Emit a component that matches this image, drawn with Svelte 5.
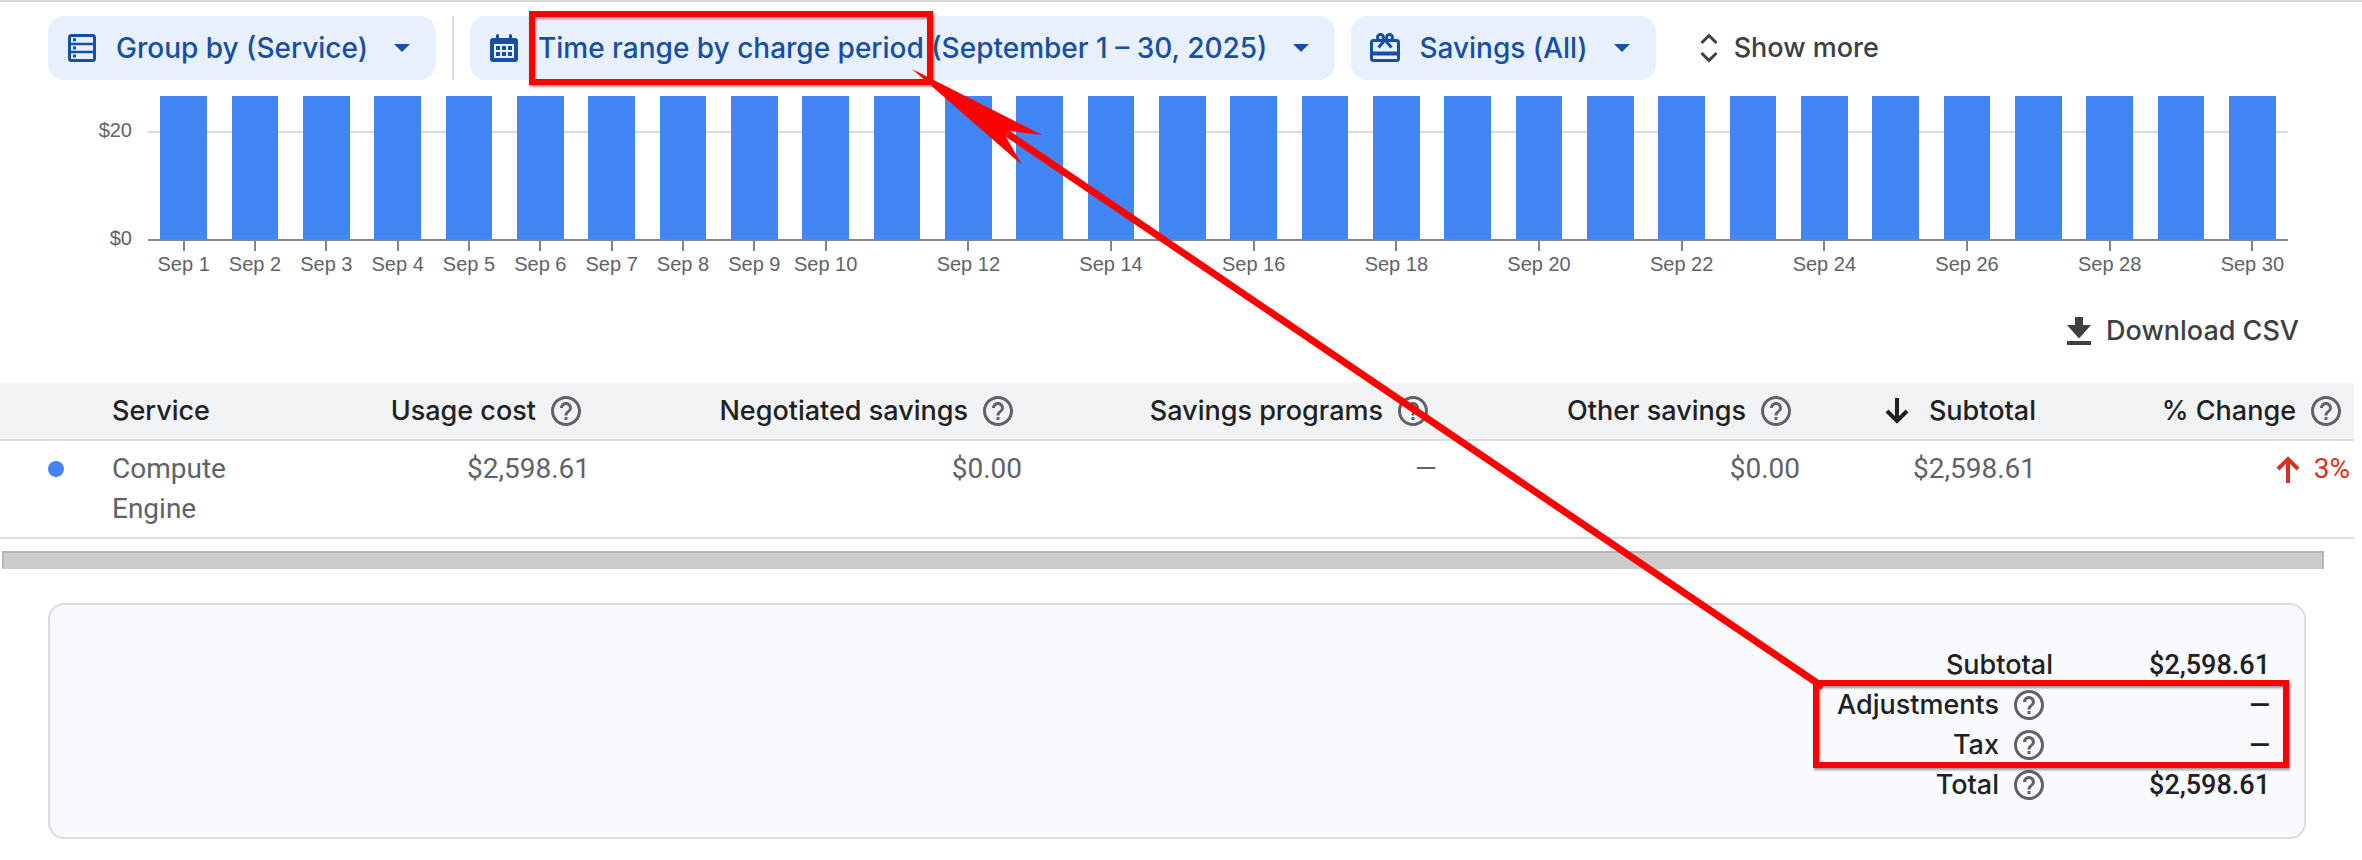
<script>
    const days = Array.from({ length: 30 }, (_, i) => i + 1);

    const columns = [
        { name: '', width: 112 },
        { name: 'Service', width: 168, align: 'left' },
        { name: 'Usage cost', width: 326, help: true },
        { name: 'Negotiated savings', width: 432, help: true },
        { name: 'Savings programs', width: 415, help: true },
        { name: 'Other savings', width: 363, help: true },
        { name: 'Subtotal', width: 236, sorted: true },
        { name: '% Change', width: 302, help: true },
    ];
    const totalWidth = columns.reduce((sum, c) => sum + c.width, 0);

    const services = [
        {
            name: 'Compute Engine',
            usage: '$2,598.61',
            negotiated: '$0.00',
            programs: '—',
            other: '$0.00',
            subtotal: '$2,598.61',
            change: '3%',
        },
    ];

    const totals = [
        { label: 'Subtotal', value: '$2,598.61' },
        { label: 'Adjustments', value: '—', help: true },
        { label: 'Tax', value: '—', help: true },
        { label: 'Total', value: '$2,598.61', help: true },
    ];

    // after the 10th only every other day is labelled
    function hasLabel(day) {
        return day <= 10 || day % 2 === 0;
    }
</script>

{#snippet helpButton(label)}
    <button class="help" aria-label="About {label}">
        <svg viewBox="0 0 24 24">
            <path
                d="M11 18h2v-2h-2v2zm1-16C6.48 2 2 6.48 2 12s4.48 10 10 10 10-4.48 10-10S17.52 2 12 2zm0 18c-4.41 0-8-3.59-8-8s3.59-8 8-8 8 3.59 8 8-3.59 8-8 8zm0-14c-2.21 0-4 1.79-4 4h2c0-1.1.9-2 2-2s2 .9 2 2c0 2-3 1.75-3 5h2c0-2.25 3-2.5 3-5 0-2.21-1.79-4-4-4z"
            />
        </svg>
    </button>
{/snippet}

{#snippet caret()}
    <svg class="icon" viewBox="0 0 36 36"><path d="M10 14h16l-8 8z" fill="currentColor" /></svg>
{/snippet}

<main class="report">
    <div class="toolbar">
        <button class="chip">
            <svg class="icon" viewBox="0 0 36 36" fill="none" stroke="currentColor">
                <rect x="5.5" y="5.5" width="25" height="25" rx="2" stroke-width="3" />
                <path d="M5 14h26M5 22h26" stroke-width="2.5" />
                <path d="M9 9.7h3M9 18h3M9 26h3" stroke-width="3" />
            </svg>
            <span>Group by (Service)</span>
            {@render caret()}
        </button>
        <div class="divider"></div>
        <button class="chip">
            <svg class="icon" viewBox="0 0 36 36" fill="currentColor">
                <path
                    fill-rule="evenodd"
                    d="M10 8V5.500a1.500 1.500 0 0 1 3 0V8h10V5.500a1.500 1.500 0 0 1 3 0V8h3a3 3 0 0 1 3 3v18a3 3 0 0 1-3 3H7a3 3 0 0 1-3-3V11a3 3 0 0 1 3-3zM8 14v14h20V14z"
                />
                <path d="M10 16h4v4h-4zM16 16h4v4h-4zM22 16h4v4h-4zM10 22h4v4h-4zM16 22h4v4h-4zM22 22h4v4h-4z" />
            </svg>
            <span>Time range by charge period (September 1 – 30, 2025)</span>
            {@render caret()}
        </button>
        <button class="chip">
            <svg class="icon" viewBox="0 0 36 36" fill="none" stroke="currentColor" stroke-width="3">
                <rect x="4.5" y="10.500" width="27" height="20" rx="2" />
                <path d="M4 23.500h28" stroke-width="4" />
                <circle cx="13.500" cy="7.500" r="3" />
                <circle cx="22.500" cy="7.500" r="3" />
                <path d="M18 10l-6.500 7.500M18 10l6.500 7.500" />
            </svg>
            <span>Savings (All)</span>
            {@render caret()}
        </button>
        <button class="show-more">
            <svg viewBox="0 0 18 30" fill="none" stroke="currentColor" stroke-width="3">
                <path d="M1.500 10L9 2.500l7.500 7.500M1.500 20L9 27.500l7.500-7.500" />
            </svg>
            <span>Show more</span>
        </button>
    </div>

    <section class="chart">
        <div class="y-axis">
            <span>$20</span>
            <span>$0</span>
        </div>
        <div class="plot">
            <div class="bars">
                {#each days as day}
                    <div class="bar"></div>
                {/each}
            </div>
            <div class="x-axis">
                {#each days as day}
                    <div class="tick" class:labelled={hasLabel(day)}>
                        {#if hasLabel(day)}Sep {day}{/if}
                    </div>
                {/each}
            </div>
        </div>
    </section>

    <div class="actions">
        <button class="download">
            <svg viewBox="0 0 24 28" fill="currentColor">
                <path d="M8 0h8v8h8L12 21.500 0 8h8zM0 24h24v4H0z" />
            </svg>
            <span>Download CSV</span>
        </button>
    </div>

    <table class="costs">
        <colgroup>
            {#each columns as column}
                <col style:width="{(column.width / totalWidth) * 100}%" />
            {/each}
        </colgroup>
        <thead>
            <tr>
                {#each columns as column}
                    <th class:left={column.align === 'left'}>
                        <div class="cell">
                            {#if column.sorted}
                                <svg class="sort" viewBox="0 0 24 26">
                                    <path d="M12 0v23M2 13l10 10 10-10" />
                                </svg>
                            {/if}
                            {column.name}
                            {#if column.help}
                                {@render helpButton(column.name)}
                            {/if}
                        </div>
                    </th>
                {/each}
            </tr>
        </thead>
        <tbody>
            {#each services as service}
                <tr>
                    <td><div class="dot"></div></td>
                    <td class="left">{service.name}</td>
                    <td>{service.usage}</td>
                    <td>{service.negotiated}</td>
                    <td>{service.programs}</td>
                    <td>{service.other}</td>
                    <td>{service.subtotal}</td>
                    <td>
                        <div class="cell change">
                            <svg viewBox="0 0 24 28"><path d="M12 28V4M2 14L12 4l10 10" /></svg>
                            {service.change}
                        </div>
                    </td>
                </tr>
            {/each}
        </tbody>
    </table>

    <div class="scrollbar"></div>

    <section class="summary">
        <table>
            <tbody>
                {#each totals as total}
                    <tr>
                        <th>
                            <div class="cell">
                                {total.label}
                                {#if total.help}
                                    {@render helpButton(total.label)}
                                {/if}
                            </div>
                        </th>
                        <td>{total.value}</td>
                    </tr>
                {/each}
            </tbody>
        </table>
    </section>

    <svg class="annotation" viewBox="0 0 2362 860" aria-hidden="true">
        <g class="boxes">
            <rect x="532" y="14" width="398" height="68" />
            <rect x="1816" y="683" width="470" height="82" />
        </g>
        <path class="shaft" d="M1008 134L1823 687" />
        <path class="head" d="M912 69L1042 135L1010 131L1006 137L1022 165z" />
    </svg>
</main>

<style>
    :global(body) {
        margin: 0;
        background: #fff;
    }

    .report {
        position: relative;
        border-top: 2px solid #dadce0;
        font-family: Inter, Roboto, sans-serif;
        font-size: 27px;
        font-weight: 500;
        line-height: 40px;
        color: #202124;
    }

    button {
        border: none;
        padding: 0;
        background: none;
        font: inherit;
        color: inherit;
        cursor: pointer;
    }

    svg {
        display: block;
        flex-shrink: 0;
    }

    .icon {
        width: 36px;
        height: 36px;
    }

    .toolbar {
        display: flex;
        gap: 16px;
        padding: 14px 48px 16px;
        font-size: 28px;
    }

    .chip {
        display: flex;
        align-items: center;
        gap: 16px;
        height: 64px;
        padding: 0 16px;
        border-radius: 16px;
        background: #e8f0fe;
        color: #174ea6;
        white-space: nowrap;
    }

    .divider {
        width: 2px;
        background: #dadce0;
    }

    .show-more {
        display: flex;
        align-items: center;
        gap: 16px;
        margin-left: 28px;
        font-size: 27px;
        color: #3c4043;
        white-space: nowrap;
    }

    .show-more svg {
        width: 18px;
        height: 30px;
    }

    .chart {
        display: flex;
        padding-right: 74px;
        font-family: 'Liberation Sans', Arial, sans-serif;
        font-size: 20px;
        font-weight: 400;
        line-height: 22px;
        color: #5f6368;
    }

    .y-axis {
        display: flex;
        flex-direction: column;
        gap: 86px;
        box-sizing: border-box;
        width: 148px;
        padding: 23px 16px 0 0;
        text-align: right;
    }

    .plot {
        flex: 1;
    }

    .bars,
    .x-axis {
        display: grid;
        grid-template-columns: repeat(30, 1fr);
    }

    .bars {
        height: 143px;
        border-bottom: 2px solid #80868b;
        background: linear-gradient(#dadce0, #dadce0) 0 35px / 100% 2px no-repeat;
    }

    .bar {
        width: 65%;
        margin: 0 auto;
        background: #4285f4;
    }

    .tick {
        text-align: center;
        white-space: nowrap;
    }

    .tick.labelled::before {
        content: '';
        display: block;
        width: 2px;
        height: 10px;
        margin: 0 auto 2px;
        background: #80868b;
    }

    .actions {
        display: flex;
        justify-content: flex-end;
        padding: 36px 63px 32px;
    }

    .download {
        display: flex;
        align-items: center;
        gap: 15px;
        color: #3c4043;
    }

    .download svg {
        width: 24px;
        height: 28px;
    }

    table {
        border-collapse: collapse;
    }

    th,
    td {
        padding: 0;
        font-weight: inherit;
        text-align: right;
        vertical-align: top;
    }

    .cell {
        display: flex;
        align-items: center;
        justify-content: flex-end;
        white-space: nowrap;
    }

    .left,
    .left .cell {
        text-align: left;
        justify-content: flex-start;
    }

    .help {
        margin: 0 6px 0 12px;
    }

    .help svg {
        width: 36px;
        height: 36px;
        fill: #5f6368;
    }

    .costs {
        width: calc(100% - 8px);
        table-layout: fixed;
    }

    .costs th,
    .costs td {
        padding: 8px 16px 8px 0;
        border-bottom: 2px solid #dadce0;
    }

    .costs th:last-child,
    .costs td:last-child {
        padding-right: 4px;
    }

    .costs th {
        background: #f1f3f4;
    }

    .costs td {
        font-family: Roboto, sans-serif;
        font-size: 28px;
        font-weight: 400;
        color: #5f6368;
    }

    .costs th:first-child,
    .costs td:first-child {
        padding-right: 0;
    }

    .sort {
        width: 24px;
        height: 26px;
        margin-right: 20px;
        fill: none;
        stroke: #202124;
        stroke-width: 4;
    }

    .dot {
        width: 16px;
        height: 16px;
        margin: 12px auto 0;
        border-radius: 50%;
        background: #4285f4;
    }

    .costs .change {
        gap: 14px;
        color: #d93025;
    }

    .change svg {
        width: 24px;
        height: 28px;
        fill: none;
        stroke: currentColor;
        stroke-width: 4;
    }

    .scrollbar {
        height: 16px;
        margin: 12px 38px 34px 2px;
        border: 2px solid #b5b5b5;
        border-bottom: none;
        background: #ccc;
    }

    .summary {
        display: flex;
        justify-content: flex-end;
        margin: 0 56px 0 48px;
        padding: 40px 34px 32px;
        border: 2px solid #dadce0;
        border-radius: 16px;
        background: #f8fafd;
    }

    .summary td {
        min-width: 217px;
        width: 217px;
        font-family: Roboto, sans-serif;
    }

    .annotation {
        position: absolute;
        top: -2px;
        left: 0;
        width: 100%;
        pointer-events: none;
    }

    .boxes {
        fill: none;
        stroke: #f00;
        stroke-width: 6;
        filter: drop-shadow(1px 2px 1px rgba(0, 0, 0, 0.4));
    }

    .shaft {
        fill: none;
        stroke: #f00;
        stroke-width: 7;
    }

    .head {
        fill: #f00;
    }
</style>
